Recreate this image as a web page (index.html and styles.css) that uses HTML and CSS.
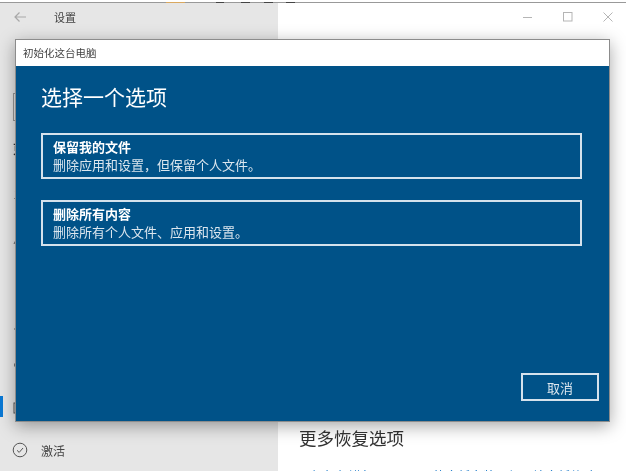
FILE: index.html
```html
<!DOCTYPE html>
<html lang="zh-CN">
<head>
    <meta charset="UTF-8">
    <title>设置</title>
    <link rel="stylesheet" href="styles.css">
</head>
<body>

<div class="window">
    <div class="topline"></div>

    <div class="panes">
        <div class="sidebar">
            <div class="titlebar">
                <svg width="12" height="12" viewBox="0 0 12 12"><path d="M12 6H1M5.500 1.500 1 6l4.500 4.500" fill="none" stroke="#a8a8a8" stroke-width="1.200"/></svg>
                <span class="apptitle">设置</span>
            </div>
            <div class="search"></div>
            <div class="section">更新和安全</div>
            <div class="nav">
                <div class="navrow"><svg width="16" height="16" viewBox="0 0 16 16"><path d="M3 5a6 6 0 0 1 10.500 0M13 11a6 6 0 0 1-10.500 0" fill="none" stroke="#555"/></svg></div>
                <div class="navrow"><svg width="16" height="16" viewBox="0 0 16 16"><path d="M2 14 8 2l6 12" fill="none" stroke="#666"/></svg></div>
                <div class="navrow"><svg width="16" height="16" viewBox="0 0 16 16"><path d="M8 1 3 3v6c0 3 3 5 5 6 2-1 5-3 5-6V3z" fill="#333"/></svg></div>
                <div class="navrow"><svg width="16" height="16" viewBox="0 0 16 16"><path d="M8 2v9M4 7l4 4 4-4M2 14h12" fill="none" stroke="#666"/></svg></div>
                <div class="navrow"><svg width="16" height="16" viewBox="0 0 16 16"><circle cx="5" cy="8" r="2.500" fill="none" stroke="#666"/><path d="M7.500 8H15" stroke="#666"/></svg></div>
                <div class="navrow selected"><svg width="16" height="16" viewBox="0 0 16 16"><rect x="2" y="3" width="12" height="10" fill="none" stroke="#555"/></svg></div>
                <div class="navrow">
                    <svg width="16" height="16" viewBox="0 0 16 16"><circle cx="8" cy="8" r="6.800" fill="none" stroke="#555"/><path d="M5 8.300 7.200 10.400 11 6" fill="none" stroke="#555"/></svg>
                    <span>激活</span>
                </div>
            </div>
        </div>

        <div class="main">
            <div class="winbtns">
                <svg width="10" height="10" viewBox="0 0 10 10"><path d="M0 5.500H9" stroke="#b5b5b5"/></svg>
                <svg width="10" height="10" viewBox="0 0 10 10"><rect x="0.500" y="0.500" width="8.500" height="8.500" fill="none" stroke="#b5b5b5"/></svg>
                <svg width="10" height="10" viewBox="0 0 10 10"><path d="M0.500 0.500 9.500 9.500M9.500 0.500 0.500 9.500" stroke="#b5b5b5"/></svg>
            </div>
            <div class="more">
                <h2>更多恢复选项</h2>
                <a class="morelink">了解如何进行 Windows 的全新安装以便开始全新体验</a>
            </div>
        </div>
    </div>

    <div class="dialog">
        <div class="dialog-title">初始化这台电脑</div>
        <div class="dialog-body">
            <h1>选择一个选项</h1>
            <div class="option">
                <b>保留我的文件</b>
                <span>删除应用和设置，但保留个人文件。</span>
            </div>
            <div class="option">
                <b>删除所有内容</b>
                <span>删除所有个人文件、应用和设置。</span>
            </div>
            <div class="dialog-foot">
                <button class="cancel">取消</button>
            </div>
        </div>
    </div>
</div>

</body>
</html>
```

FILE: styles.css
```css
body {
    margin: 0;
    font-family: "Noto Sans CJK SC", "Liberation Sans", sans-serif;
    overflow: hidden;
}

/* the reference is a scaled up capture, everything in it is a bit soft */
.window {
    position: relative;
    display: flex;
    flex-direction: column;
    width: 626px;
    height: 471px;
    padding-top: 2px;
    box-sizing: border-box;
    overflow: hidden;
    background-color: #fff;
    filter: blur(0.4px);
}

.topline {
    height: 1px;
    background: linear-gradient(
        90deg,
        #999 166px,
        #d9a860 166px, #d9a860 185px,
        #999 185px, #999 216px,
        #444 216px, #444 224px,
        #999 224px, #999 241px,
        #444 241px, #444 250px,
        #999 250px, #999 264px,
        #444 264px, #444 273px,
        #999 273px, #999 286px,
        #444 286px, #444 295px,
        #999 295px
    );
}

.panes {
    flex: 1;
    display: flex;
    min-height: 0;
}

.sidebar {
    width: 278px;
    background-color: #e6e6e6;
}

.titlebar {
    display: flex;
    align-items: center;
    height: 28px;
    padding-left: 14px;
}

.apptitle {
    margin-left: 28px;
    font-size: 11px;
    color: #444;
}

.search {
    width: 250px;
    height: 28px;
    margin: 62px 0 0 13px;
    border: 1px solid #999;
    box-sizing: border-box;
}

.section {
    margin: 17px 0 0 13px;
    height: 21px;
    line-height: 21px;
    font-size: 12px;
    font-weight: bold;
    color: #333;
}

.nav {
    margin-top: 15px;
}

.navrow {
    position: relative;
    display: flex;
    align-items: center;
    gap: 13px;
    height: 42.5px;
    padding-left: 12px;
    font-size: 12px;
    color: #444;
}

.selected::before {
    content: "";
    position: absolute;
    left: 0;
    top: 9px;
    width: 3px;
    height: 21px;
    background-color: #0a78d4;
}

.main {
    flex: 1;
    display: flex;
    flex-direction: column;
    justify-content: space-between;
}

.winbtns {
    display: flex;
    justify-content: flex-end;
    gap: 30px;
    padding: 9px 13px 0 0;
}

.more {
    height: 44px;
    padding-left: 21px;
}

.more h2 {
    margin: 0 0 17px 0;
    font-size: 17.5px;
    font-weight: normal;
    line-height: 22px;
    color: #333;
}

.morelink {
    display: block;
    font-size: 12.5px;
    white-space: nowrap;
    color: #0a6fc4;
}

.dialog {
    position: absolute;
    left: 15px;
    top: 39px;
    width: 595px;
    height: 383px;
    border: 1px solid #8c8c8c;
    box-sizing: border-box;
    display: flex;
    flex-direction: column;
    box-shadow: 0 4px 16px rgba(0, 0, 0, 0.35);
}

.dialog-title {
    height: 26px;
    line-height: 26px;
    padding-left: 7px;
    font-size: 10.5px;
    color: #444;
    background-color: #fff;
}

.dialog-body {
    flex: 1;
    display: flex;
    flex-direction: column;
    padding: 0 10px 20px 25px;
    background-color: #005288;
    color: #fff;
}

.dialog-body h1 {
    margin: 16px 0 22px 0;
    font-size: 21px;
    font-weight: normal;
    line-height: 29px;
}

.option {
    display: flex;
    flex-direction: column;
    justify-content: center;
    height: 46px;
    margin: 0 17px 21px 0;
    padding-left: 10px;
    border: 2px solid #d5e2ec;
    box-sizing: border-box;
    font-size: 13px;
    line-height: 18px;
    color: #dbe6ee;
}

.option b {
    color: #fff;
}

.dialog-foot {
    margin-top: auto;
    display: flex;
    justify-content: flex-end;
}

.cancel {
    width: 78px;
    height: 28px;
    padding: 0;
    background: none;
    border: 2px solid #d5e2ec;
    font-family: inherit;
    font-size: 13px;
    color: #dbe6ee;
}
```
